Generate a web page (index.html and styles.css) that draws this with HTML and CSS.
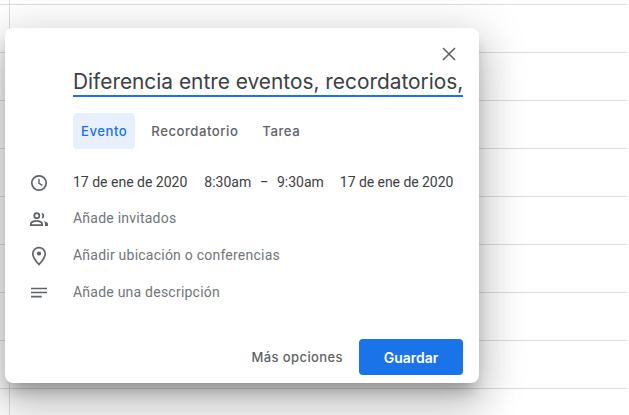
FILE: index.html
```html
<!DOCTYPE html>
<html lang="es">
<head>
<meta charset="utf-8">
<title>Evento</title>
<link rel="stylesheet" href="styles.css">
</head>
<body>
<div class="grid"></div>
<section class="dialog">
  <div class="top">
    <button class="close" aria-label="Cerrar">
      <svg width="24" height="24" viewBox="0 0 24 24"><path d="M18 6 12 12l6 6M6 6 12 12l-6 6" fill="none" stroke="#5f6368" stroke-width="1.600"/></svg>
    </button>
  </div>
  <div class="title-wrap"><div class="title">Diferencia entre eventos, recordatorios,</div></div>
  <div class="tabs">
    <span class="tab active">Evento</span>
    <span class="tab">Recordatorio</span>
    <span class="tab">Tarea</span>
  </div>
  <div class="rows">
    <div class="row r-time">
      <svg class="icon" width="24" height="24" viewBox="0 0 24 24"><circle cx="12" cy="13" r="7.200" fill="none" stroke="#5f6368" stroke-width="1.700"/><path d="M12 8.800v4.500l3.400 2" fill="none" stroke="#5f6368" stroke-width="1.400"/></svg>
      <span class="dark d1">17 de ene de 2020</span>
      <span class="dark d2">8:30am</span>
      <span class="dark d3">–</span>
      <span class="dark d4">9:30am</span>
      <span class="dark d5">17 de ene de 2020</span>
    </div>
    <div class="row r-guests">
      <svg class="icon" width="24" height="24" viewBox="0 0 24 24"><circle cx="9.800" cy="9.700" r="2.500" fill="none" stroke="#5f6368" stroke-width="1.800"/><path d="M3.800 19.200v-1.300c0-2 3.700-3 5.700-3s5.700 1 5.700 3v1.300z" fill="none" stroke="#5f6368" stroke-width="1.800"/><path d="M14.500 7a2.700 2.700 0 0 1 0 5.400 5 5 0 0 0 0-5.400zM16.500 15c2 .4 4.500 1.200 4.500 3v2h-3v-2c0-1.200-.7-2.300-1.500-3z" fill="#5f6368"/></svg>
      <span class="muted">Añade invitados</span>
    </div>
    <div class="row r-place">
      <svg class="icon" width="24" height="24" viewBox="0 0 24 24"><path d="M12 4.600c-3.400 0-6.200 2.600-6.200 6.100 0 4.300 6.200 10.800 6.200 10.800s6.200-6.500 6.200-10.800c0-3.500-2.800-6.100-6.200-6.100z" fill="none" stroke="#5f6368" stroke-width="1.700"/><circle cx="12" cy="10.500" r="2.100" fill="#5f6368"/></svg>
      <span class="muted">Añadir ubicación o conferencias</span>
    </div>
    <div class="row r-desc">
      <svg class="icon" width="24" height="24" viewBox="0 0 24 24"><path d="M4 8.500h16M4 12.500h16M4 16.700h10.700" fill="none" stroke="#5f6368" stroke-width="1.700"/></svg>
      <span class="muted">Añade una descripción</span>
    </div>
  </div>
  <div class="footer">
    <span class="more">Más opciones</span>
    <button class="save">Guardar</button>
  </div>
</section>
</body>
</html>
```
FILE: styles.css
```css
html, body { margin: 0; height: 100%; }
body { width: 629px; height: 415px; overflow: hidden; background: #fff; font-family: Roboto, sans-serif; }
.grid {
  position: absolute; left: 0; top: 0; width: 627px; height: 415px;
  background:
    linear-gradient(#dadce0, #dadce0) 9px 0 / 1px 100% no-repeat,
    repeating-linear-gradient(to bottom, transparent 0, transparent 4px, #dadce0 4px, #dadce0 5px, transparent 5px, transparent 48px);
}
.dialog {
  position: absolute; left: 5px; top: 28px; width: 474px; height: 355px;
  background: #fff; border-radius: 8px; display: flex; flex-direction: column;
  box-shadow: 0 24px 38px 3px rgba(0,0,0,.14), 0 9px 46px 8px rgba(0,0,0,.14), 0 11px 15px -5px rgba(0,0,0,.28);
}
.top { height: 36px; padding: 14px 18px 0 0; display: flex; justify-content: flex-end; box-sizing: border-box; }
.close { width: 24px; height: 24px; padding: 0; border: 0; background: none; display: block; }
.close svg { display: block; }
.title-wrap { margin: 0 16px 0 68px; height: 31px; border-bottom: 2px solid #1a73e8; overflow: hidden; }
.title { font-family: Inter, sans-serif; font-size: 20.870px; line-height: 35px; color: #3c4043; white-space: nowrap; }
.tabs { display: flex; margin: 16px 0 0 68px; height: 36px; align-items: center; gap: 8px; }
.tab { font-family: Inter, sans-serif; font-size: 13.200px; letter-spacing: .5px; font-weight: 500; color: #5f6368; padding: 0 8px; line-height: 36px; border-radius: 4px; }
.tab.active { color: #1a73e8; background: #e8f0fe; }
.rows { margin-top: 15px; display: flex; flex-direction: column; }
.row { display: flex; align-items: center; height: 36px; padding-left: 22px; font-size: 14px; white-space: nowrap; }
.r-place { margin-top: 1px; }
.r-desc { margin-top: 1px; }
.icon { flex: none; margin-right: 22px; display: block; }
.dark { color: #3c4043; }
.muted { color: #70757a; letter-spacing: .23px; }
.d2 { margin-left: 17px; }
.d3 { margin-left: 9px; font-size: 12px; font-weight: 500; }
.d4 { margin-left: 9px; }
.d5 { margin-left: 16px; letter-spacing: -.05px; }
.footer { margin-top: auto; padding: 0 16px 8px 0; display: flex; justify-content: flex-end; align-items: center; gap: 16px; }
.more { font-family: Inter, sans-serif; font-size: 13px; letter-spacing: .4px; font-weight: 500; color: #5f6368; }
.save { width: 104px; height: 36px; border: 0; border-radius: 4px; background: #1a73e8; color: #fff; font-family: Inter, sans-serif; font-size: 14px; font-weight: 600; padding: 0; }
```
